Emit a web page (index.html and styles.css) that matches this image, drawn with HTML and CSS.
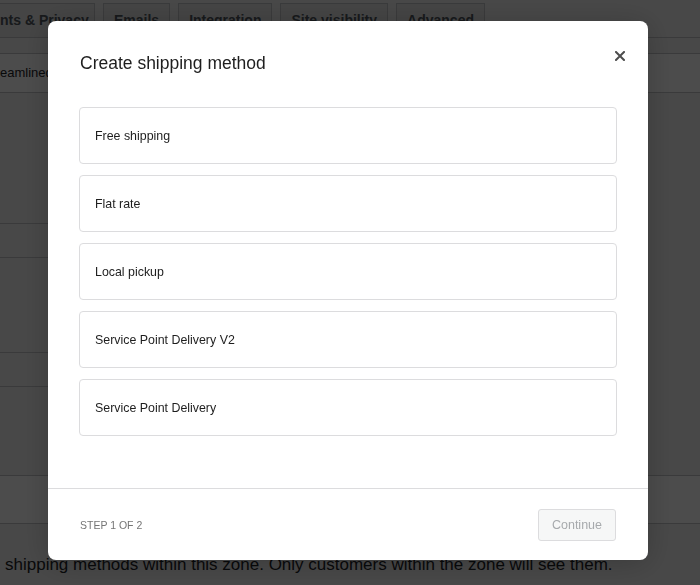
FILE: index.html
```html
<!DOCTYPE html>
<html>
<head>
  <title>Shipping zones</title>
  <link rel="stylesheet" href="styles.css">
</head>
<body>
  <div class="page">
    <nav class="tabs">
      <a class="tab tab-first">nts &amp; Privacy</a>
      <a class="tab">Emails</a>
      <a class="tab">Integration</a>
      <a class="tab">Site visibility</a>
      <a class="tab">Advanced</a>
    </nav>
    <div class="subnav"></div>
    <div class="notice-row">eamlined</div>

    <div class="zone-table">
      <div class="zone-row zone-row-short"></div>
      <div class="zone-row zone-row-tall"></div>
      <div class="zone-row zone-row-short"></div>
      <div class="zone-row zone-row-rest"></div>
    </div>
    <div class="methods-head"></div>
    <p class="zone-desc">shipping methods within this zone. Only customers within the zone will see them.</p>
  </div>

  <div class="backdrop"></div>

  <div class="modal" role="dialog">
    <div class="modal-header">
      <h1 class="modal-title">Create shipping method</h1>
      <button class="modal-close" aria-label="Close">
        <svg width="10" height="10" viewBox="0 0 10 10">
          <path d="M1 1 L9 9 M9 1 L1 9" stroke="#4d4d4d" stroke-width="2" stroke-linecap="square"/>
        </svg>
      </button>
    </div>
    <div class="modal-body">
      <div class="method-option">Free shipping</div>
      <div class="method-option">Flat rate</div>
      <div class="method-option">Local pickup</div>
      <div class="method-option">Service Point Delivery V2</div>
      <div class="method-option">Service Point Delivery</div>
    </div>
    <div class="modal-footer">
      <span class="step-label">STEP 1 OF 2</span>
      <button class="continue-btn" disabled>Continue</button>
    </div>
  </div>
</body>
</html>
```

FILE: styles.css
```css
body {
    margin: 0;
    font-family: "Liberation Sans", Arial, sans-serif;
    background-color: #f0f0f1;
    color: #1d2327;
    overflow: hidden;
}

/* page behind the dialog */
.page {
    height: 585px;
}
.tabs {
    display: flex;
    gap: 8px;
    height: 34px;
    padding-top: 3px;
    border-bottom: 1px solid #c3c4c7;
}
.tab {
    display: block;
    height: 34px;
    box-sizing: border-box;
    padding: 0 10px;
    line-height: 32px;
    font-size: 14px;
    font-weight: bold;
    color: #50575e;
    background-color: #e6e6e7;
    border: 1px solid #c3c4c7;
    border-bottom: none;
    white-space: nowrap;
}
.tab-first {
    padding-left: 0;
    border-left: none;
    width: 95px;
    box-sizing: border-box;
}
.subnav {
    height: 15px;
    border-bottom: 1px solid #c3c4c7;
}
.notice-row {
    height: 38px;
    line-height: 38px;
    font-size: 13px;
    background-color: #fff;
    border-bottom: 1px solid #c3c4c7;
    white-space: nowrap;
}
.zone-table {
    width: 620px;
    margin-top: 130px;
    border-top: 1px solid #c3c4c7;
}
.zone-row {
    border-bottom: 1px solid #c3c4c7;
}
.zone-row-short {
    height: 33px;
}
.zone-row-tall {
    height: 94px;
}
.zone-row-rest {
    height: 88px;
    border-bottom: none;
}
.methods-head {
    height: 47px;
    background-color: #fff;
    border-top: 1px solid #c3c4c7;
    border-bottom: 1px solid #c3c4c7;
}
.zone-desc {
    margin: 31px 0 0 5px;
    font-size: 17px;
    white-space: nowrap;
}

.backdrop {
    position: fixed;
    inset: 0;
    background-color: rgba(0, 0, 0, 0.7);
}

/* dialog */
.modal {
    position: fixed;
    left: 48px;
    top: 21px;
    width: 600px;
    height: 539px;
    display: flex;
    flex-direction: column;
    background-color: #fff;
    border-radius: 8px;
    box-shadow: 0 3px 30px rgba(0, 0, 0, 0.2);
}
.modal-header {
    position: relative;
    padding: 30px 32px 0;
}
.modal-title {
    margin: 0;
    font-size: 17.5px;
    line-height: 24px;
    font-weight: normal;
    color: #1e1e1e;
}
.modal-close {
    position: absolute;
    top: 23px;
    right: 16px;
    width: 24px;
    height: 24px;
    padding: 0;
    border: none;
    background: none;
    display: flex;
    align-items: center;
    justify-content: center;
}
.modal-body {
    flex: 1;
    display: flex;
    flex-direction: column;
    gap: 11px;
    padding: 32px 31px 0;
}
.method-option {
    height: 57px;
    box-sizing: border-box;
    display: flex;
    align-items: center;
    padding: 1px 15px 0;
    font-size: 12.4px;
    color: #1e1e1e;
    border: 1px solid #dcdcde;
    border-radius: 4px;
}
.modal-footer {
    height: 71px;
    display: flex;
    align-items: center;
    justify-content: space-between;
    padding: 0 32px;
    border-top: 1px solid #dcdcde;
}
.step-label {
    font-size: 10.5px;
    color: #757575;
}
.continue-btn {
    height: 32px;
    padding: 0 13px;
    font-family: "Liberation Sans", Arial, sans-serif;
    font-size: 12.5px;
    color: #a7aaad;
    background-color: #f6f7f7;
    border: 1px solid #dcdcde;
    border-radius: 3px;
}
```
